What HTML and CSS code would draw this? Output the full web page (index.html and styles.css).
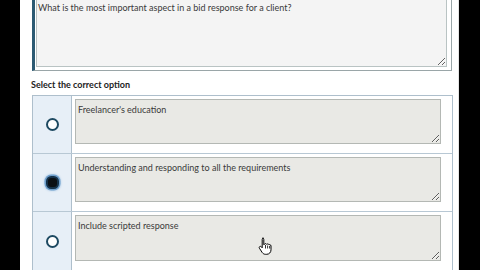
FILE: index.html
```html
<!DOCTYPE html>
<html>
<head>
<meta charset="utf-8">
<link rel="stylesheet" href="styles.css">
</head>
<body>
<div class="page">
  <div class="question">
    <textarea class="qtext" readonly>What is the most important aspect in a bid response for a client?</textarea>
  </div>
  <div class="label">Select the correct option</div>
  <div class="options">
    <div class="row">
      <div class="radio-cell"><span class="radio"></span></div>
      <div class="text-cell"><textarea class="otext" readonly>Freelancer's education</textarea></div>
    </div>
    <div class="row">
      <div class="radio-cell"><span class="radio checked"></span></div>
      <div class="text-cell"><textarea class="otext" readonly>Understanding and responding to all the requirements</textarea></div>
    </div>
    <div class="row">
      <div class="radio-cell"><span class="radio"></span></div>
      <div class="text-cell">
        <textarea class="otext" readonly>Include scripted response</textarea>
        <svg class="cursor" width="14" height="18" viewBox="0 0 14 18">
          <path d="M4.5 1.2c.8 0 1.3.6 1.3 1.3v5.2l.4-.1c.2-.6.7-1 1.3-1 .6 0 1 .3 1.2.8.3-.3.6-.5 1.1-.5.6 0 1 .4 1.2.9.2-.1.4-.2.7-.2.8 0 1.3.6 1.3 1.4v3.8c0 2.5-1.8 4.5-4.3 4.5H7.5c-1.4 0-2.5-.7-3.3-1.8L1.4 11.2c-.4-.6-.2-1.4.4-1.7.5-.3 1.2-.2 1.6.3l.8 1V2.5c0-.7.5-1.3 1.3-1.3z" fill="#fff" stroke="#000" stroke-width="1"/>
          <path d="M7.5 8v3.5M9.6 8.5v3M11.6 9v2.5" stroke="#000" stroke-width="0.8" fill="none"/>
        </svg>
      </div>
    </div>
  </div>
</div>
</body>
</html>
```
FILE: styles.css
```css
html, body {
  margin: 0;
  padding: 0;
  background: #000;
  height: 270px;
  overflow: hidden;
}
body {
  display: flex;
}
.page {
  margin-left: 20px;
  width: 426px;
  height: 270px;
  background: #fff;
  padding-left: 12px;
  border-right: 1px solid #e4e4e4;
  margin-right: 1px;
  box-sizing: content-box;
  font-family: Lato, "Liberation Sans", sans-serif;
  color: #3a3a3a;
}
.question {
  border-left: 3px solid #2c5a73;
  border-right: 1px solid #9aa6a8;
  border-bottom: 1px solid #9aa6a8;
  padding: 0 4px 3px 1px;
  box-sizing: border-box;
  width: 420px;
  height: 71px;
  display: flex;
}
.qtext {
  flex: 1;
  height: 100%;
  margin: 0;
  box-sizing: border-box;
  background: #f4f4f4;
  border: 1px solid #b9c3c3;
  border-top: none;
  padding: 2px 2px 2px 1px;
  font-family: Lato, "Liberation Sans", sans-serif;
  font-size: 9px;
  line-height: 12px;
  color: #3a3a3a;
  outline: none;
}
.label {
  margin-top: 8px;
  margin-left: -1px;
  height: 16px;
  font-size: 9px;
  font-weight: bold;
  color: #222;
  line-height: 12px;
}
.options {
  width: 421px;
  border: 1px solid #aebfcc;
  box-sizing: border-box;
  display: flex;
  flex-direction: column;
}
.row {
  display: flex;
  height: 58px;
  border-bottom: 1px solid #b8c8d4;
  box-sizing: border-box;
}
.row:last-child {
  border-bottom: none;
}
.radio-cell {
  width: 38px;
  background: #e7eff7;
  border-right: 1px solid #aebfcc;
  display: flex;
  align-items: center;
  justify-content: center;
}
.radio {
  width: 13px;
  height: 13px;
  box-sizing: border-box;
  border-radius: 50%;
  border: 2.5px solid #1e4a62;
  background: #fff;
}
.radio.checked {
  background: #0a0f14;
  border-color: #15324a;
  box-shadow: 0 0 0 1.5px #6f9fcc, 0 0 2px 2px #b5cfe8;
  border-radius: 40%;
}
.text-cell {
  flex: 1;
  padding: 3px 11px 9px 3px;
  position: relative;
  display: flex;
}
.otext {
  flex: 1;
  margin: 0;
  box-sizing: border-box;
  background: #e9e9e5;
  border: 1px solid #b4b8b4;
  padding: 4px 2px;
  font-family: Lato, "Liberation Sans", sans-serif;
  font-size: 9px;
  line-height: 12px;
  color: #3a3a3a;
  outline: none;
}
.cursor {
  position: absolute;
  left: 186px;
  top: 25px;
}
```
